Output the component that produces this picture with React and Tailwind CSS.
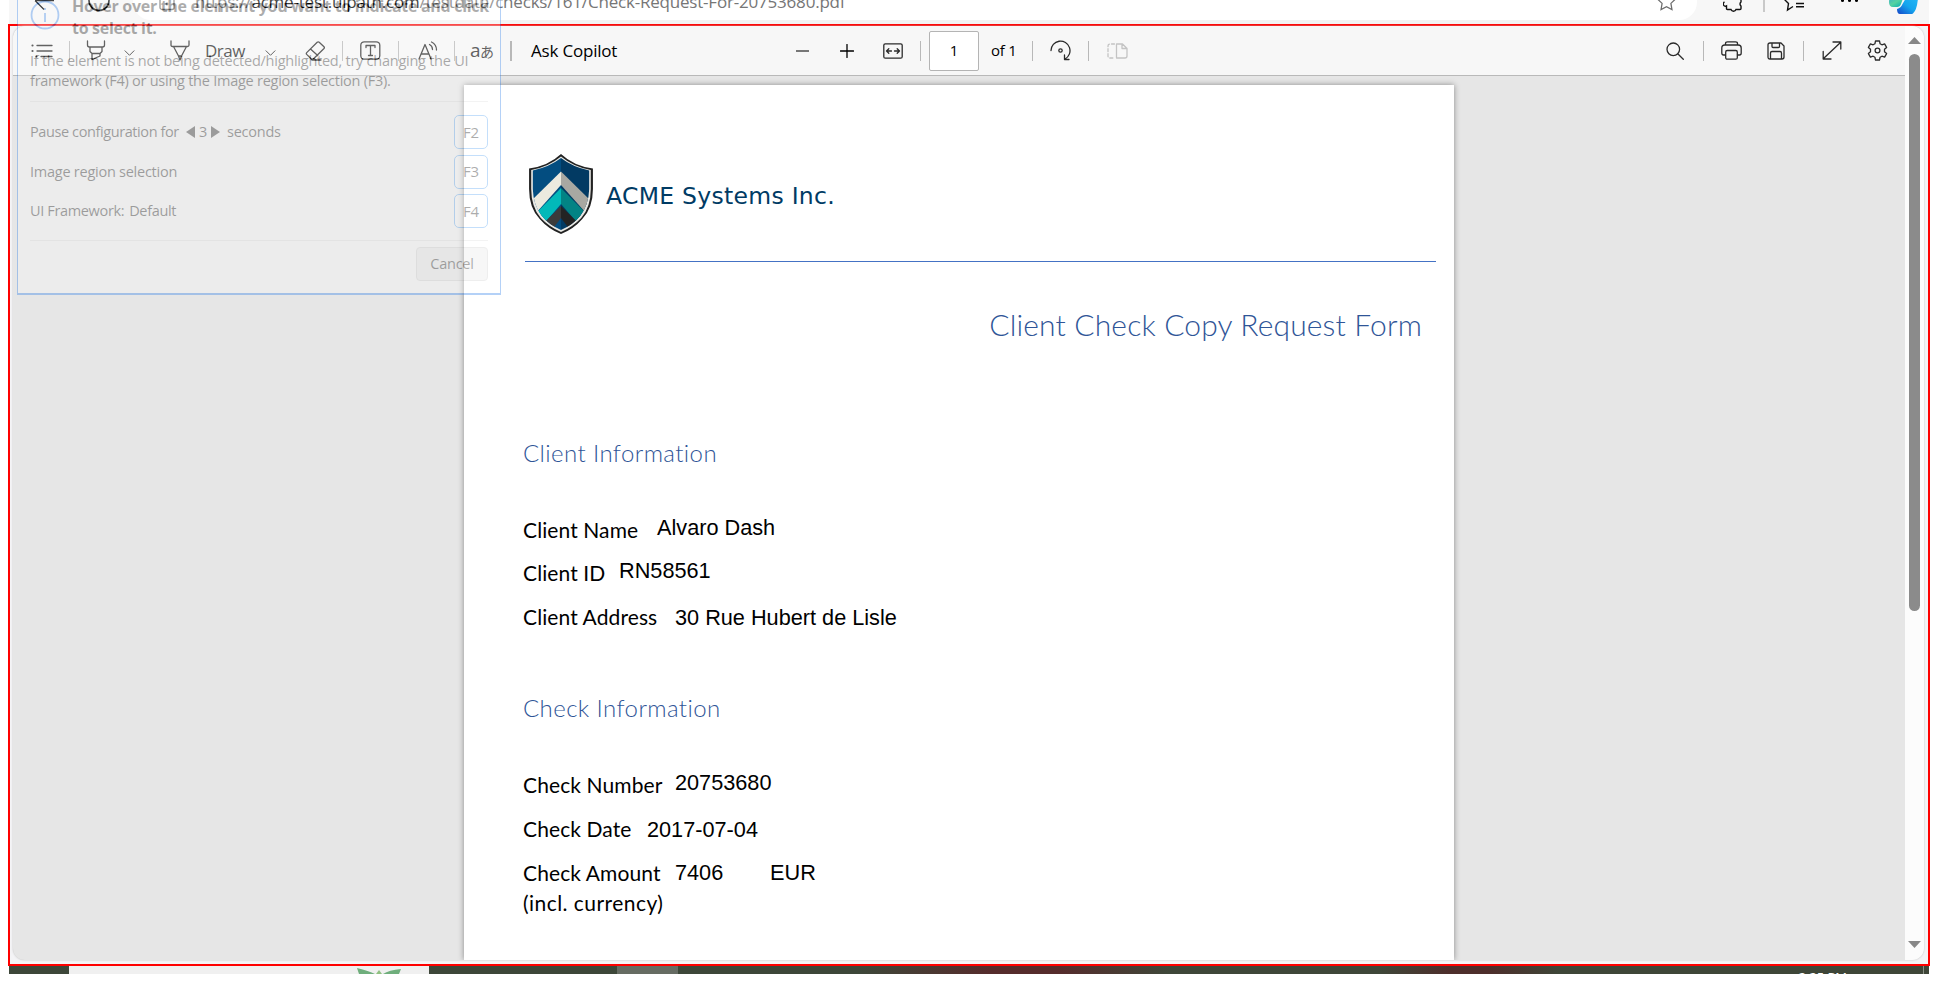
const segoe = "font-['Open_Sans','Noto_Sans_CJK_JP',sans-serif]";

function Sep({ className = '' }) {
  return <div className={`h-5 w-px shrink-0 bg-[#b8b8b8] ${className}`} />;
}

function Icon({ className = '', children, vb = '0 0 20 20' }) {
  return (
    <svg viewBox={vb} fill="none" stroke="currentColor" strokeWidth="1.3" strokeLinejoin="round" strokeLinecap="round" className={`shrink-0 ${className}`}>
      {children}
    </svg>
  );
}

const STAR = 'M10 1.5l2.6 5.4 5.9.8-4.3 4.1 1 5.9-5.2-2.8-5.2 2.8 1-5.9-4.3-4.1 5.9-.8z';

function AddressBar() {
  return (
    <div className="relative flex h-6 overflow-hidden bg-[#f7f7f7]">
      <div className="absolute left-[124px] top-[-16px] flex h-9 w-[1564px] items-center rounded-full bg-white" />
      <svg className="absolute left-[24px] top-[-11px] h-[24px] w-[24px] text-black" viewBox="0 0 24 24" fill="none" stroke="currentColor" strokeWidth="1.3">
        <path d="M2 11.5H21M2 11.500l9 9" />
      </svg>
      <svg className="absolute left-[79px] top-[-11px] h-[23px] w-[22px]" viewBox="0 0 22 23" fill="none" stroke="#111" strokeWidth="1.6">
        <circle cx="11" cy="11.5" r="10" />
      </svg>
      <svg className="absolute left-[150px] top-[-8px] h-[19px] w-[16px]" viewBox="0 0 16 19" fill="none" stroke="#777" strokeWidth="1.3">
        <rect x="1" y="6" width="14" height="11.5" rx="2" />
        <path d="M4 6V3a4 4 0 018 0v3" />
        <circle cx="8" cy="12" r=".8" fill="#777" />
      </svg>
      <div className={`absolute left-[186px] top-[-12px] whitespace-nowrap text-[17px] leading-[28px] tracking-[-0.2px] text-[#767676] ${segoe}`}>
        https://<span className="text-black">acme-test.uipath.com</span>/testdata/checks/161/Check-Request-For-20753680.pdf
      </div>
      <svg className="absolute left-[1647px] top-[-9px] h-[21px] w-[21px]" viewBox="0 0 20 20" fill="none" stroke="#6d6d6d" strokeWidth="1.2"><path d={STAR} /></svg>
      <svg className="absolute left-[1714px] top-[-9px] h-[21px] w-[21px]" viewBox="0 0 21 21" fill="none" stroke="#111" strokeWidth="1.4">
        <path d="M2 5h5a3 3 0 016 0h5v6a2.500 2.500 0 000 4v2.500q0 1-1 1h-4a2.700 2.700 0 01-5 0H4.500q-1 0-1-1V15a2 2 0 11-2-4" />
      </svg>
      <div className="absolute left-[1754px] top-0 h-3 w-0.5 bg-[#c9c9c9]" />
      <svg className="absolute left-[1775px] top-[-9px] h-[22px] w-[23px]" viewBox="0 0 23 22" fill="none" stroke="#111" strokeWidth="1.4">
        <path d="M9 15.500l-5.500 3.500 1-6.500L0 8l6-1 3-6 3 6M12 12.500h8M12 15.800h8" />
      </svg>
      <div className="absolute left-[1832px] top-[-1px] flex gap-[4px]">
        <i className="size-[3px] rounded-full bg-black" /><i className="size-[3px] rounded-full bg-black" /><i className="size-[3px] rounded-full bg-black" />
      </div>
      <svg className="absolute left-[1878px] top-[-14px] h-[28px] w-[32px]" viewBox="0 0 32 28">
        <defs>
          <linearGradient id="cpa" x1="0" y1="0" x2="0.6" y2="1"><stop offset="0" stopColor="#2b8ff0" /><stop offset=".7" stopColor="#55d3a0" /><stop offset="1" stopColor="#16b5b0" /></linearGradient>
          <linearGradient id="cpb" x1="0" y1="1" x2="1" y2="0"><stop offset="0" stopColor="#1646c8" /><stop offset=".5" stopColor="#14a5ee" /><stop offset="1" stopColor="#24b7f5" /></linearGradient>
        </defs>
        <path d="M3 4h16l-5 14q-1 3-4 3H6q-4 0-4-5z" fill="url(#cpa)" />
        <path d="M19 12h12q-1 12-5 15.500-1 .5-2 .5H13q-3 0-3-5 4-1 5.500-5z" fill="url(#cpb)" />
      </svg>
      <div className="absolute bottom-0 left-0 h-1 w-full bg-[#f3f3f3]" />
    </div>
  );
}

function Toolbar() {
  return (
    <div className={`flex h-[50px] w-[1892px] shrink-0 items-center rounded-tl-xl border-b border-[#b9b9b9] bg-[#f7f7f7] pl-[18px] text-[#2b2b2b] ${segoe}`}>
      <Icon className="h-4 w-[22px]" vb="0 0 22 16"><path d="M6 2.500h15M6 8h15M10 13.500h11" /><path strokeWidth="2.200" d="M1.500 2.500h.01M1.500 8h.01M5.500 13.500h.01" /></Icon>
      <Sep className="ml-[16px]" />
      <Icon className="ml-[16px] h-[21px] w-[20px]" vb="0 0 20 21"><path d="M1.500 1v4q0 2 2 2h13q2 0 2-2V1M4 7.500v4l2 2h8l2-2v-4M6 13.500v6l8-3.500v-2.500" /></Icon>
      <Icon className="ml-[18px] mt-1 h-[6px] w-[11px]" vb="0 0 11 6"><path strokeWidth="1" d="M1 .8l4.500 4.500 4.500-4.500" /></Icon>
      <Icon className="ml-[35px] h-[21px] w-[20px]" vb="0 0 20 21"><path d="M1 1v4q0 1.500 1.500 1.500h15q1.500 0 1.500-1.500V1M3.500 6.500l5 9.500h3l5-9.500M8.500 16l1.500 4 1.500-4" /></Icon>
      <span className="ml-[15px] w-[60px] whitespace-nowrap text-[17px] tracking-[-0.5px]">Draw</span>
      <Icon className="mt-1 h-[6px] w-[11px]" vb="0 0 11 6"><path strokeWidth="1" d="M1 .8l4.500 4.500 4.500-4.500" /></Icon>
      <Icon className="ml-[29px] h-[20px] w-[21px]" vb="0 0 21 20"><path d="M12.200 1.300L1.700 11.600q-.8.900 0 1.800l4.600 4.600q1 .9 2 0L19 7.500q.8-.9 0-1.800l-4.800-4.400q-1-.9-2 0zM5.500 8l7.200 6.500M7 19h9" /></Icon>
      <Sep className="ml-[16px]" />
      <Icon className="ml-[17px] h-[19px] w-[21px]" vb="0 0 21 19"><rect x=".8" y=".8" width="19" height="17.400" rx="3.500" /><path d="M6 6.500V4.500h9v2M10.500 4.500v10M8.500 14.500h4" /></Icon>
      <Sep className="ml-[17px]" />
      <Icon className="ml-[19px] h-[20px] w-[20px]" vb="0 0 20 20"><path d="M1 18L7 3.500 13 18M3.200 13h7.600M11.500 3.500q3 1.500 3 5M13.500 1q5 2.500 5 8" /></Icon>
      <Sep className="ml-[16px]" />
      <span className="ml-[15px] w-[24px] whitespace-nowrap text-[19px] leading-none tracking-[-0.5px]">a<span className="text-[14px]">あ</span></span>
      <div className="ml-[16px] h-5 w-0.5 bg-[#b8b8b8]" />
      <span className="ml-[19px] w-[265px] whitespace-nowrap text-[17px] tracking-[-0.2px] text-black">Ask Copilot</span>
      <div className="h-[2px] w-[13px] bg-[#777]" />
      <Icon className="ml-[31px] h-[14px] w-[14px] text-black" vb="0 0 14 14"><path d="M.5 7h13M7 .5v13" /></Icon>
      <Icon className="ml-[29px] h-[16px] w-[20px]" vb="0 0 20 16"><rect x=".8" y=".8" width="18.400" height="14.400" rx="1.500" /><path d="M3.500 8h5M5.800 5.800L3.500 8l2.300 2.200M11.500 8h5M14.200 5.800L16.500 8l-2.300 2.200" /></Icon>
      <Sep className="ml-[17px]" />
      <div className="ml-[8px] flex h-10 w-[50px] items-center justify-center rounded-[2px] border border-[#b4b4b4] bg-white text-[15px] text-black">1</div>
      <span className="ml-[12px] w-[41px] whitespace-nowrap text-[15px] tracking-[-0.2px] text-black">of 1</span>
      <Sep />
      <Icon className="ml-[17px] h-[21px] w-[21px]" vb="0 0 21 21"><path d="M1 10.500a9.500 9.500 0 1114 8.500M14.500 15v4.500h4.500" /><circle cx="10.500" cy="10.500" r="1.700" /></Icon>
      <Sep className="ml-[17px]" />
      <Icon className="ml-[18px] h-[16px] w-[21px] text-[#c4c4c4]" vb="0 0 21 16"><path d="M9.500 1h6l4.500 4.500V13q0 2-2 2H9.500zM15 1v4.500h5" /><path strokeDasharray="3 2" d="M7.500 1H3Q1 1 1 3v10q0 2 2 2h4.500" /></Icon>
      <div className="grow" />
      <Icon className="h-[18px] w-[18px]" vb="0 0 18 18"><circle cx="7.300" cy="7.300" r="6.300" /><path d="M12 12l5.300 5.300" /></Icon>
      <Sep className="ml-[19px]" />
      <Icon className="ml-[17px] h-[19px] w-[21px]" vb="0 0 21 19"><path d="M4.500 14H2.500Q.8 14 .8 12V7q0-3 3-3h13.400q3 0 3 3v5q0 2-1.700 2h-2M4.500 4V2.500q0-1.700 2-1.700h8q2 0 2 1.700V4" /><rect x="4.700" y="9.500" width="11.600" height="8.700" rx="1.500" /></Icon>
      <Icon className="ml-[25px] h-[18px] w-[18px]" vb="0 0 18 18"><path d="M1 3q0-2 2-2h11l3 3v11q0 2-2 2H3q-2 0-2-2zM5 1v3.500q0 1 1 1h5.500q1 0 1-1V1M3.500 17v-6q0-1.500 1.500-1.500h8q1.500 0 1.500 1.500v6" /></Icon>
      <Sep className="ml-[18px]" />
      <Icon className="ml-[18px] h-[19px] w-[20px]" vb="0 0 20 19"><path d="M1.500 17.500l17-16M11 1h7.800v7M1.200 10.500V18H9" /></Icon>
      <Icon className="ml-[25px] mr-[17px] h-[21px] w-[21px]" vb="0 0 21 21"><path d="M8.500 1h4l.6 2.800 1.800 1 2.700-.9 2 3.500-2.100 1.900v2.400l2.100 1.900-2 3.500-2.700-.9-1.800 1-.6 2.800h-4l-.6-2.800-1.800-1-2.700.9-2-3.500 2.100-1.900V9.300L1.400 7.400l2-3.500 2.700.9 1.800-1z" /><circle cx="10.500" cy="10.500" r="2.400" /></Icon>
    </div>
  );
}

function Logo() {
  return (
    <svg viewBox="0 0 62 82" className="h-[82px] w-[66px] shrink-0" preserveAspectRatio="none">
      <defs>
        <clipPath id="shield"><path d="M31 5Q42 14 57.500 17.500V36Q57 52 49 63 42 72 31 77 20 72 13 63 5 52 4.500 36V17.500Q20 14 31 5z" /></clipPath>
      </defs>
      <path d="M31 1Q43 13 61 15.500V36Q61 55 51 66 43 76 31 81 19 76 11 66 1 55 1 36V15.500Q19 13 31 1z" fill="#222" />
      <path d="M31 3.500Q43 14 59 17V36Q59 54 50 65 42 74 31 79 20 74 12 65 3 54 3 36V17Q19 14 31 3.500z" fill="#e8e8e4" />
      <g clipPath="url(#shield)">
        <path d="M0 0h31v82H0z" fill="#034d80" />
        <path d="M31 0h31v82H31z" fill="#023a63" />
        <path d="M31 18.500L0 51v18l31-37z" fill="#eceadf" />
        <path d="M31 18.500L62 51v18L31 32z" fill="#a8a8a2" />
        <path d="M31 35L4 64l10 8 17-21z" fill="#02b9b9" />
        <path d="M31 35L58 64l-10 8-17-21z" fill="#028384" />
        <path d="M31 53L12 73l9 6 10-14z" fill="#3b3b3b" />
        <path d="M31 53L50 73l-9 6-10-14z" fill="#232323" />
      </g>
    </svg>
  );
}

function Field({ label, value, extra, h, labelW, gap = '', lift = '' }) {
  return (
    <div className={`flex items-baseline whitespace-nowrap ${h}`}>
      <span className={`font-[Lato,sans-serif] text-[21px] leading-[30px] tracking-[0.1px] ${labelW}`}>{label}</span>
      <span className={`relative text-[21.700px] leading-[30px] font-['Liberation_Sans',Arial,sans-serif] ${gap} ${lift}`}>{value}</span>
      {extra}
    </div>
  );
}

const heading = 'font-[Lato,sans-serif] font-light text-[#2f5597] whitespace-nowrap';

function Page() {
  return (
    <div className="ml-[451px] mt-[9px] flex h-[875px] w-[990px] flex-col overflow-hidden bg-white pl-[59px] text-black shadow-[0_0_6px_rgba(0,0,0,0.4)]">
      <div className="mt-[68px] flex h-[82px] shrink-0 items-center pl-[5px]">
        <Logo />
        <span className="ml-[12px] mt-[6px] whitespace-nowrap text-[23.500px] tracking-[0.28px] text-[#003b64] font-['DejaVu_Sans',sans-serif]">ACME Systems Inc.</span>
      </div>
      <div className="ml-[2px] mt-[26px] h-px w-[911px] shrink-0 bg-[#4472c4]" />
      <div className={`mt-[40px] h-[44px] w-[899px] shrink-0 text-right text-[30px] leading-[44px] tracking-[0.15px] ${heading}`}>Client Check Copy Request Form</div>
      <div className={`mt-[90px] h-[34px] shrink-0 text-[24px] leading-[34px] tracking-[0.4px] ${heading}`}>Client Information</div>
      <div className="mt-[45px]">
        <Field h="h-[43px]" label="Client Name" value="Alvaro Dash" labelW="w-[134px]" lift="-top-[3px]" />
        <Field h="h-[44px]" label="Client ID" value="RN58561" labelW="w-[96px]" lift="-top-[3px]" />
        <Field h="h-[44px]" label="Client Address" value="30 Rue Hubert de Lisle" labelW="w-[152px]" />
      </div>
      <div className={`mt-[45px] h-[34px] shrink-0 text-[24px] leading-[34px] tracking-[0.4px] ${heading}`}>Check Information</div>
      <div className="mt-[45px]">
        <Field h="h-[44px]" label="Check Number" value="20753680" labelW="w-[152px]" lift="-top-[3px]" />
        <Field h="h-[44px]" label="Check Date" value="2017-07-04" labelW="w-[124px]" />
        <Field h="h-[30px]" label="Check Amount" value="7406" labelW="w-[152px]" gap="w-[95px]" lift="-top-px" extra={<span className="relative -top-px text-[21.700px] font-['Liberation_Sans',Arial,sans-serif]">EUR</span>} />
        <div className="font-[Lato,sans-serif] text-[21px] leading-[30px] tracking-[0.45px]">(incl. currency)</div>
      </div>
    </div>
  );
}

function Key({ children }) {
  return <div className="flex h-[34px] w-[34px] items-center justify-center rounded-[5px] border-[1.500px] border-[#4a9ff5] bg-white/40 text-[15px]">{children}</div>;
}

function Hint() {
  return (
    <div className={`absolute left-[17px] top-[-20px] h-[315px] w-[484px] border border-b-2 border-[#1a73e8] bg-white/80 px-[12px] text-black opacity-32 ${segoe}`}>
      <div className="flex pt-[12px]">
        <svg viewBox="0 0 30 30" className="mt-[7px] size-[30px] shrink-0" fill="none" stroke="#1a73e8" strokeWidth="1.800"><circle cx="15" cy="15" r="13.500" /><path d="M15 13v9M15 8v2" /></svg>
        <div className="ml-[12px] mt-[2px] whitespace-nowrap text-[16px] font-bold leading-[22px] tracking-[-0.300px]">Hover over the element you want to indicate and click<br />to select it.</div>
      </div>
      <div className="mt-[12px] h-[40px] whitespace-nowrap text-[14.500px] leading-[19.500px] tracking-[-0.25px]">If the element is not being detected/highlighted, try changing the UI<br />framework (F4) or using the Image region selection (F3).</div>
      <div className="mt-[10px] h-px bg-[#ddd]" />
      <div className="mt-[13px] flex h-[214px] flex-col gap-[5.500px] text-[14.500px] tracking-[-0.25px]">
        <div className="flex items-center justify-between">
          <div className="flex items-center whitespace-nowrap"><span className="w-[149px] tracking-[-0.400px]">Pause configuration for</span>
            <svg viewBox="0 0 9 12" className="ml-[7px] h-3 w-[9px]"><path d="M9 0v12L0 6z" /></svg>
            <span className="mx-[4px]">3</span>
            <svg viewBox="0 0 9 12" className="mr-[7px] h-3 w-[9px]"><path d="M0 0v12l9-6z" /></svg>seconds</div>
          <Key>F2</Key>
        </div>
        <div className="flex items-center justify-between"><span>Image region selection</span><Key>F3</Key></div>
        <div className="flex items-center justify-between"><span className="tracking-[-0.350px]">UI Framework:<span className="ml-[5px]">Default</span></span><Key>F4</Key></div>
        <div className="mt-[6px] h-px shrink-0 bg-[#ddd]" />
        <div className="ml-auto mt-px flex h-[34px] w-[72px] shrink-0 items-center justify-center rounded-[4px] border border-[#ccc] bg-[#e8e8e8]">Cancel</div>
      </div>
    </div>
  );
}

function Taskbar() {
  return (
    <div className={`flex h-[8px] overflow-hidden bg-[linear-gradient(90deg,#3d4739_850px,#552c2c_980px,#552c2c_1050px,#3e4739_1160px,#3e4739_1370px,#4d2e2b_1440px,#4d2e2b_1480px,#3e4638_1550px)] ${segoe}`}>
      <div className="ml-[60px] flex w-[360px] justify-end bg-[#f0f0f0]">
        <svg viewBox="0 0 46 8" className="mr-[27px] h-[8px] w-[46px]"><path d="M1 2q12 3 18 6H3zM45 3q-12 1-18 5h16z" fill="#6fae7c" /><path d="M20 8l3-4 3 4z" fill="#8fc07f" /></svg>
      </div>
      <div className="ml-[188px] w-[61px] bg-[#666c63]" />
      <span className="ml-auto mt-[3px] whitespace-nowrap text-[13px] leading-[16px] text-white">2:25 PM</span>
      <div className="ml-[76px] mr-[5px] w-px bg-[#8a9185]" />
    </div>
  );
}

export default function App() {
  return (
    <div className="relative h-[990px] w-[1938px] overflow-hidden bg-white">
      <div className="ml-[9px] w-[1920px]"><AddressBar /></div>
      <div className="ml-[8px] h-[942px] w-[1922px] border-2 border-[#ff0000] bg-[#f4f4f6]">
        <div className="ml-[3px] flex h-[934px] w-[1911px] overflow-hidden rounded-xl bg-[#e6e6e6] shadow-[0_0_2px_#bbb]">
          <div className="w-[1892px] shrink-0 overflow-hidden">
            <Toolbar />
            <Page />
          </div>
          <div className="flex w-[19px] flex-col items-center bg-[#fcfcfc]">
            <svg viewBox="0 0 13 7" className="mt-[11px] h-[7px] w-[13px]"><path d="M0 7L6.500 0 13 7z" fill="#888" /></svg>
            <div className="mt-[10px] h-[557px] w-[11px] rounded-full bg-[#8b8b8b]" />
            <div className="grow" />
            <svg viewBox="0 0 13 7" className="mb-[12px] h-[7px] w-[13px]"><path d="M0 0h13L6.500 7z" fill="#888" /></svg>
          </div>
        </div>
      </div>
      <div className="ml-[9px] w-[1920px]"><Taskbar /></div>
      <Hint />
    </div>
  );
}
